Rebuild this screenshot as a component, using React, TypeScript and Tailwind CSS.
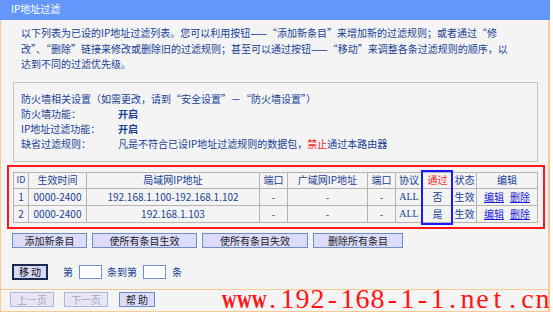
import React from "react";

const NAVY = "text-[#203f96]";

const columns = [
  { label: "ID", w: 15 },
  { label: "生效时间", w: 58 },
  { label: "局域网IP地址", w: 173 },
  { label: "端口", w: 28 },
  { label: "广域网IP地址", w: 80 },
  { label: "端口", w: 28 },
  { label: "协议", w: 27 },
  { label: "通过", w: 30 },
  { label: "状态", w: 24 },
  { label: "编辑", w: 61 },
];

const rows = [
  { id: "1", time: "0000-2400", lan: "192.168.1.100-192.168.1.102", pass: "否" },
  { id: "2", time: "0000-2400", lan: "192.168.1.103", pass: "是" },
];

const watermark = "www.192-168-1-1.net.cn".split("");

function Btn({ className, children, disabled }: { className: string; children: React.ReactNode; disabled?: boolean }) {
  return (
    <button
      className={`${className} block h-[15px] shrink-0 border text-[10px] leading-[13px] ${
        disabled
          ? "border-[#a9b8dc] bg-[#e6e6f4] text-[#a8a8b8]"
          : "border-[#6f8cc4] bg-[#dcdcfa] text-[#222]"
      }`}
    >
      {children}
    </button>
  );
}

export default function App() {
  return (
    <div className="relative h-[315px] w-[553px] overflow-hidden bg-white font-[Noto_Sans_CJK_SC,sans-serif]">
      <div className="w-[550px]">
        <div className="h-[20px] bg-[#6497fa] pl-[11px] text-[10px] leading-[18px] text-white">IP地址过滤</div>

        <div className="border-r-2 border-l border-[#f9c98f] bg-[#f4f4f4] pb-[9px]">
          <p className={`pl-[20px] pt-[5px] text-[10px] leading-[15.5px] ${NAVY}`}>
            以下列表为已设的IP地址过滤列表。您可以利用按钮——“添加新条目”来增加新的过滤规则；或者通过“修
            <br />
            改”、“删除”链接来修改或删除旧的过滤规则；甚至可以通过按钮——“移动”来调整各条过滤规则的顺序，以
            <br />
            达到不同的过滤优先级。
          </p>

          <div className={`ml-[12px] mt-[10px] w-[525px] border border-[#c4c4c4] pb-[9px] pl-[7px] pt-[8px] text-[10px] leading-[15.3px] ${NAVY}`}>
            <div>防火墙相关设置（如需更改，请到“安全设置”－“防火墙设置”）</div>
            <div className="flex">
              <span className="w-[97px]">防火墙功能：</span>
              <span className="font-bold">开启</span>
            </div>
            <div className="flex">
              <span className="w-[97px]">IP地址过滤功能：</span>
              <span className="font-bold">开启</span>
            </div>
            <div className="flex">
              <span className="w-[97px]">缺省过滤规则：</span>
              <span>
                凡是不符合已设IP地址过滤规则的数据包，<span className="text-[#ff1a1a]">禁止</span>通过本路由器
              </span>
            </div>
          </div>

          <div className="relative ml-[6px] mt-[3px] w-[538px] border-2 border-[#ff1a1a] pb-[4px] pl-[4px] pt-[5px]">
            <table className={`w-[524px] table-fixed border-collapse text-center text-[10px] ${NAVY}`}>
              <colgroup>
                {columns.map((c, i) => (
                  <col key={i} style={{ width: c.w }} />
                ))}
              </colgroup>
              <thead>
                <tr className="h-[16px]">
                  {columns.map((c, i) => (
                    <td
                      key={i}
                      className={`border border-[#b4b4b4] p-0 leading-[14px] ${
                        c.label === "通过" ? "text-[#ff1a1a]" : ""
                      } ${i === 0 ? "text-[9px]" : ""}`}
                    >
                      {c.label}
                    </td>
                  ))}
                </tr>
              </thead>
              <tbody>
                {rows.map((r) => (
                  <tr key={r.id} className="h-[17px]">
                    <td className="border border-[#b4b4b4] p-0 leading-[15px]">{r.id}</td>
                    <td className="border border-[#b4b4b4] p-0 leading-[15px]">{r.time}</td>
                    <td className="border border-[#b4b4b4] p-0 leading-[15px]">{r.lan}</td>
                    <td className="border border-[#b4b4b4] p-0 leading-[15px]">-</td>
                    <td className="border border-[#b4b4b4] p-0 leading-[15px]">-</td>
                    <td className="border border-[#b4b4b4] p-0 leading-[15px]">-</td>
                    <td className="border border-[#b4b4b4] p-0 font-[Liberation_Serif,serif] text-[10px] leading-[15px]">ALL</td>
                    <td className="border border-[#b4b4b4] p-0 leading-[15px]">{r.pass}</td>
                    <td className="border border-[#b4b4b4] p-0 leading-[15px]">生效</td>
                    <td className="border border-[#b4b4b4] p-0 leading-[15px]">
                      <span className="text-[#1a1ad8] underline">编辑</span>
                      <span className="ml-[6px] text-[#1a1ad8] underline">删除</span>
                    </td>
                  </tr>
                ))}
              </tbody>
            </table>
            <div className="absolute left-[412px] top-[3px] h-[55px] w-[32px] border-2 border-[#1a1aff]" />
          </div>

          <div className="ml-[11px] mt-[4px] flex gap-[5px]">
            <Btn className="w-[75px]">添加新条目</Btn>
            <Btn className="w-[105px]">使所有条目生效</Btn>
            <Btn className="w-[106px]">使所有条目失效</Btn>
            <Btn className="w-[90px]">删除所有条目</Btn>
          </div>

          <div className={`ml-[11px] mt-[16px] flex items-center text-[10px] ${NAVY}`}>
            <button className="h-[16px] w-[36px] border-2 border-[#1c2a52] bg-[#d8daf4] text-[10px] leading-[12px] text-[#111]">
              移 动
            </button>
            <span className="ml-[15px]">第</span>
            <span className="ml-[6px] h-[14px] w-[23px] border border-[#6f8cc4] bg-white" />
            <span className="ml-[5px]">条到第</span>
            <span className="ml-[6px] h-[14px] w-[23px] border border-[#6f8cc4] bg-white" />
            <span className="ml-[6px]">条</span>
          </div>
        </div>

        <div className="flex h-[23px] items-start border-y border-r-2 border-l border-[#f9c98f] bg-[#f4f4f4] pl-[9px] pt-[2px]">
          <Btn className="w-[44px]" disabled>
            上一页
          </Btn>
          <Btn className="ml-[10px] w-[44px]" disabled>
            下一页
          </Btn>
          <Btn className="ml-[11px] w-[36px]">帮 助</Btn>
        </div>
      </div>

      <div className="absolute left-[220px] top-[285px] flex font-[Liberation_Serif,serif] text-[28px] leading-[28px] text-[#ff1414]">
        {watermark.map((ch, i) => (
          <span
            key={i}
            className={`inline-block w-[15px] text-center ${ch === "w" ? "scale-x-[0.72] font-bold" : ""}`}
          >
            {ch}
          </span>
        ))}
      </div>
    </div>
  );
}
